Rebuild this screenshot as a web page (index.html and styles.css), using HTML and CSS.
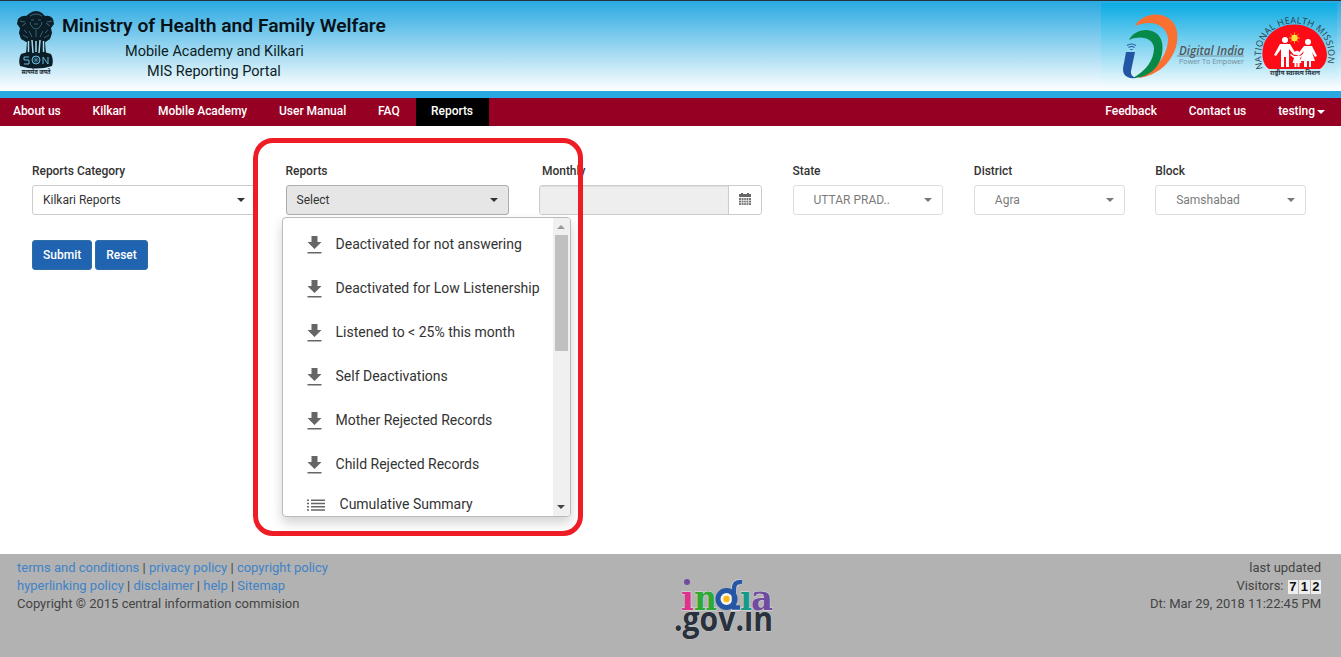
FILE: index.html
```html
<!DOCTYPE html>
<html lang="en">
<head>
<meta charset="utf-8">
<title>MIS Reporting Portal</title>
<link rel="stylesheet" href="styles.css">
</head>
<body>
<svg class="defs" width="0" height="0" aria-hidden="true">
  <symbol id="download" viewBox="0 0 16 20"><path d="M4.500 1h6v6h4L7.500 14 .5 7h4zM.5 17h14v1.500H.5z"/></symbol>
  <symbol id="list" viewBox="0 0 19 12"><path d="M0 .5h2V2H0zM4 .5h14V2H4zM0 3.800h2v1.500H0zM4 3.800h14v1.500H4zM0 7h2v1.500H0zM4 7h14v1.500H4zM0 10.200h2v1.500H0zM4 10.200h14v1.500H4z"/></symbol>
</svg>
<header class="header">
  <svg class="emblem" viewBox="0 0 40 66" width="40" height="66">
    <g fill="#0b1d27">
      <path d="M14 2q6-4 12 0l3 3q5-1 8 3l1 5-3 4 1 5-2 6-6 4H12l-7-4-2-6 1-5-3-4 1-5q4-4 8-3z"/>
      <path d="M9 27h22l-2 4 1 12H10l1-12z"/>
      <path d="M5 43q15-6 30 0 3 6 1 12-16 5-32 0-2-6 1-12z"/>
    </g>
    <g fill="none" stroke="#69b8db" stroke-width="1">
      <path d="M14 5q6-4 12 0M15 9h3m4 0h3M18 13h4M14 11q1 6 6 7 5-1 6-7M4 10l5 1m22 0 5-1M6 15l4-3m20 0 4 3M8 19l3 3m18 0 3-3M13 20l3 6m8 0 3-6M20 19v7M7 24l5 3m21-3-5 3" opacity=".45"/>
      <path d="M12.500 30v11M16 29l1 13M20 30v11M24 29l-1 13M27.500 30v11" stroke="#a8dbef" stroke-width="1.500"/>
      <circle cx="20" cy="49" r="4"/><path d="M20 45v8M16 49h8M17 46l6 6m0-6-6 6" stroke-width=".5"/>
      <path d="M13 46H8v3h5v4H8M27 53v-7l5 7v-7"/>
    </g>
    <text x="20" y="63" class="emblem-motto" textLength="29" lengthAdjust="spacingAndGlyphs">सत्यमेव जयते</text>
  </svg>
  <div class="titles">
    <h1>Ministry of Health and Family Welfare</h1>
    <p class="sub">Mobile Academy and Kilkari</p>
    <p class="sub portal">MIS Reporting Portal</p>
  </div>
  <div class="partners">
    <svg viewBox="1101 3 236 88" width="236" height="88">
      <path fill="#fb6f31" d="M1135 26C1140 17 1151 13 1161 15C1174 18 1179 29 1177 42C1174 61 1158 76 1138 78C1158 68 1168 54 1168 39C1167 25 1152 19 1135 26z"/>
      <path fill="#07894a" d="M1129 40C1133 32 1143 28 1152 31C1161 34 1164 43 1162 54C1159 69 1147 78 1133 78C1147 70 1154 59 1154 48C1153 38 1141 35 1129 40z"/>
      <path fill="#2256a5" d="M1126 52h9l-4 19q-1 5 5 7-9 1-12-4-2-4 0-11z"/>
      <path d="M1127 45.500q4.500-3 9 0M1128.500 47.500q3-2 6 0M1130.500 49.500h2" fill="none" stroke="#245b9e" stroke-width="1.100"/>
      <text class="digital" x="1179" y="55" textLength="65" lengthAdjust="spacingAndGlyphs">Digital India</text>
      <path d="M1177 56h67" stroke="#627079" stroke-width=".7"/>
      <text class="power" x="1179" y="63.500" textLength="65" lengthAdjust="spacingAndGlyphs">Power To Empower</text>
      <path id="arc" d="M1263 69C1246 8 1344 8 1326 69" fill="none"/>
      <path fill="#fd0b17" d="M1269 69C1260 63 1261 46 1267 38C1279 20 1310 20 1321 38C1330 51 1328 63 1320 69z"/>
      <text class="mission"><textPath href="#arc" textLength="126" lengthAdjust="spacing">NATIONAL HEALTH MISSION</textPath></text>
      <path d="M1294.500 32.500v11M1289 38h11M1290.500 34l8 8m0-8-8 8" stroke="#ff9a20" stroke-width="1"/><circle cx="1294.500" cy="38" r="3.200" fill="#ffe23a"/>
      <g fill="#fff">
        <circle cx="1285" cy="40" r="3"/><path d="M1280 44h10l6 10-2 1-5-6v18h-3V57h-2v10h-3V49l-5 7-2-1z"/>
        <circle cx="1308" cy="42" r="3"/><path d="M1304 46h8l5 10-2 1-3-5 3 9h-4v6h-2v-6h-2v6h-3v-6h-4l4-10-5 5-2-1z"/>
        <circle cx="1297" cy="53" r="2.300"/><path d="M1294 56h6l3-2 1 1-4 3 1.500 5h-2v4h-2v-4h-1v4h-2v-4h-2l1.500-5-4-3 1-1z"/>
      </g>
      <text class="hindi" x="1295" y="75" textLength="50" lengthAdjust="spacingAndGlyphs">राष्ट्रीय स्वास्थ्य मिशन</text>
    </svg>
  </div>
</header>
<nav class="nav">
  <a>About us</a><a>Kilkari</a><a>Mobile Academy</a><a>User Manual</a><a>FAQ</a><a class="active">Reports</a>
  <div class="nav-right"><a>Feedback</a><a>Contact us</a><a class="user">testing<i class="caret"></i></a></div>
</nav>
<main class="main">
  <div class="fields">
    <div class="field category"><label>Reports Category</label><div class="select">Kilkari Reports<i class="caret"></i></div></div>
    <div class="field reports"><label>Reports</label><div class="select open">Select<i class="caret"></i></div>
      <div class="menu">
        <ul>
          <li><svg><use href="#download"/></svg>Deactivated for not answering</li>
          <li><svg><use href="#download"/></svg>Deactivated for Low Listenership</li>
          <li><svg><use href="#download"/></svg>Listened to &lt; 25% this month</li>
          <li><svg><use href="#download"/></svg>Self Deactivations</li>
          <li><svg><use href="#download"/></svg>Mother Rejected Records</li>
          <li><svg><use href="#download"/></svg>Child Rejected Records</li>
          <li class="summary"><svg><use href="#list"/></svg>Cumulative Summary</li>
        </ul>
        <div class="scrollbar"><i class="up"></i><i class="thumb"></i><i class="down"></i></div>
      </div>
      <div class="highlight"></div>
    </div>
    <div class="field monthly"><label>Monthly</label><div class="date"><span></span><button>
      <svg width="12" height="13" viewBox="0 0 12 13"><path fill="#666" d="M0 1h2V0h2v1h4V0h2v1h2v3H0z"/><path fill="#777" d="M0 5h12v7H0z"/><path d="M0 7.500h12M0 9.700h12M2.500 5v7M4.800 5v7M7.200 5v7M9.500 5v7" stroke="#fff" stroke-width=".6"/></svg></button></div></div>
    <div class="field"><label>State</label><div class="select disabled">UTTAR PRAD..<i class="caret"></i></div></div>
    <div class="field"><label>District</label><div class="select disabled">Agra<i class="caret"></i></div></div>
    <div class="field"><label>Block</label><div class="select disabled">Samshabad<i class="caret"></i></div></div>
  </div>
  <div class="actions"><button>Submit</button><button>Reset</button></div>
</main>
<footer class="footer">
  <div class="links">
    <div><a>terms and conditions</a> | <a>privacy policy</a> | <a>copyright policy</a></div>
    <div><a>hyperlinking policy</a> | <a>disclaimer</a> | <a>help</a> | <a>Sitemap</a></div>
    <div>Copyright © 2015 central information commision</div>
  </div>
  <svg class="india" viewBox="670 576 110 70" width="110" height="70">
    <text class="gov" x="674" y="631" textLength="99" lengthAdjust="spacingAndGlyphs">.gov.ın</text>
    <g class="india-name">
      <text x="681" y="609.500" textLength="13" lengthAdjust="spacingAndGlyphs" fill="#dc348c">ı</text>
      <text x="694" y="609.500" textLength="23" lengthAdjust="spacingAndGlyphs" fill="#2daa35">n</text>
      <text x="740" y="609.500" textLength="12" lengthAdjust="spacingAndGlyphs" fill="#159a87">ı</text>
      <text x="751" y="609.500" textLength="22" lengthAdjust="spacingAndGlyphs" fill="#714ba0">a</text>
    </g>
    <circle cx="687" cy="582" r="3" fill="#714ba0"/>
    <path d="M742 582q-8-1-8 7v19h6" fill="none" stroke="#ddd" stroke-width="6"/>
    <circle cx="726.500" cy="599" r="8.500" fill="#f5f5ee" stroke="#2656a6" stroke-width="5"/>
    <path d="M742 582q-8-1-8 7v18.500h6" fill="none" stroke="#2656a6" stroke-width="4.500"/>
    <circle cx="726.500" cy="599" r="3.200" fill="#fdb817"/>
  </svg>
  <div class="stats">
    <div>last updated</div>
    <div class="visitors">Visitors: <span class="counter"><b>7</b><b>1</b><b>2</b></span></div>
    <div>Dt: Mar 29, 2018 11:22:45 PM</div>
  </div>
</footer>
</body>
</html>
```
FILE: styles.css
```css
* { box-sizing: border-box; }
body { margin: 0; width: 1341px; height: 657px; display: flex; flex-direction: column; overflow: hidden; background: #fff; color: #333; font: 12px/18px Roboto, sans-serif; }
h1, p, ul { margin: 0; padding: 0; }
.defs { position: absolute; }
.header { height: 98px; flex: none; display: flex; border-top: 1px solid #24333c; border-bottom: 7px solid #29a9e1; background: linear-gradient(#29a9e1, #fff); }
.emblem { margin: 10px 0 0 16px; overflow: visible; }
.emblem-motto { font: bold 7px "Noto Sans", sans-serif; text-anchor: middle; fill: #14242b; }
.titles { width: 323px; margin: 12px 0 0 6px; color: #071117; }
.titles h1 { font-size: 19.250px; line-height: 25px; font-weight: 600; white-space: nowrap; }
.sub { font-size: 14.500px; line-height: 20px; padding-left: 63px; margin-top: 4px; color: #0d1d24; }
.portal { padding-left: 85px; margin-top: 0; }
.partners { margin: 2px 4px 0 auto; height: 88px; background: linear-gradient(#0aabe3, #fff); }
.partners svg { display: block; overflow: visible; }
.digital { font: italic 600 13px "Open Sans", sans-serif; fill: #53575c; }
.power { font: 7px "Open Sans", sans-serif; fill: #788c98; }
.mission { font: 9px "Open Sans", sans-serif; fill: #263c48; }
.hindi { font: bold 6px "Noto Sans", sans-serif; text-anchor: middle; fill: #27333a; }
.nav { height: 28px; flex: none; display: flex; padding-left: 13px; background: #960023; color: #fff; font-weight: 500; line-height: 26px; letter-spacing: -.04px; }
.nav a { margin-right: 31.900px; }
.nav .active { margin: 0 0 0 -16px; padding: 0 15.500px; background: #000; }
.nav-right { margin-left: auto; display: flex; }
.nav .user { margin-right: 16px; }
.caret { display: inline-block; width: 0; border: 4px solid transparent; border-top-color: currentColor; border-bottom: 0; vertical-align: middle; }
.user .caret { margin-left: 2px; }
.main { height: 428px; padding: 35px 32px 0; }
.fields { display: grid; grid-template-columns: repeat(3, 223px) repeat(3, 150.800px); column-gap: 30.520px; }
.field { position: relative; }
.field label { display: block; height: 24px; line-height: 20px; font-weight: 500; letter-spacing: -.04px; }
.select { height: 30px; display: flex; align-items: center; justify-content: space-between; padding: 0 10px; border: 1px solid #ccc; border-radius: 3px; line-height: 28px; }
.category .select { padding-right: 9px; }
.open { background: #e6e6e6; border-color: #adadad; }
.disabled { padding-left: 20px; opacity: .65; }
.monthly label { padding-left: 3px; }
.date { display: flex; height: 30px; border: 1px solid #ccc; border-radius: 3px; }
.date span { flex: 1; background: #eee; box-shadow: inset 0 1px 1px #ddd; }
.date button { width: 33px; padding: 2px 0 0; border: 0; border-left: 1px solid #ccc; border-radius: 0 3px 3px 0; background: #fff; }
.menu { position: absolute; z-index: 2; left: -4px; top: 56px; width: 289px; height: 300px; display: flex; overflow: hidden; border: 1px solid #bbb; border-radius: 4px; background: #fff; box-shadow: 0 6px 12px rgba(0,0,0,.175); }
.menu ul { flex: 1; list-style: none; padding-top: 4px; }
.menu li { height: 44px; padding-left: 24px; display: flex; align-items: center; font-size: 14px; white-space: nowrap; }
.menu li svg { width: 16px; height: 20px; margin: 2px 13px 0 0; fill: #666; }
.menu .summary { height: 36px; }
.menu .summary svg { width: 19px; height: 12px; margin-right: 14px; }
.scrollbar { width: 17px; background: #f0f0f0; display: flex; flex-direction: column; align-items: center; }
.up { border: 4px solid transparent; border-bottom-color: #999; border-top: 0; margin-top: 7px; }
.thumb { width: 13px; height: 116px; margin-top: 6px; background: #c0c0c0; }
.down { border: 4px solid transparent; border-top-color: #444; border-bottom: 0; margin: auto 0 7px; }
.highlight { position: absolute; z-index: 3; left: -33px; top: -23px; width: 330px; height: 398px; border: 5px solid #ee1c25; border-radius: 20px; }
.actions { display: flex; gap: 3px; margin-top: 25px; }
.actions button { height: 30px; padding: 0 10px; border: 1px solid #2e6da4; border-radius: 3px; background: #2063b1; color: #fff; font: 500 12px Roboto, sans-serif; }
.footer { height: 103px; display: flex; justify-content: space-between; padding: 5px 20px 0 17px; background: #b2b2b2; font-size: 13px; color: #444; position: relative; }
.footer a { color: #3f83c8; }
.india { position: absolute; left: 670px; top: 22px; overflow: visible; }
.india-name { font: bold 36px "DejaVu Serif", serif; stroke: #ddd; stroke-width: 1px; paint-order: stroke; }
.gov { font: bold 34px "Open Sans", sans-serif; fill: #29313c; stroke: #ccc; stroke-width: 1px; paint-order: stroke; }
.stats { text-align: right; }
.visitors { display: flex; justify-content: flex-end; gap: 4px; }
.counter { display: flex; gap: 1px; align-self: center; margin-top: 2px; }
.counter b { width: 10.500px; height: 14px; background: #eee; color: #111; font: bold 13px/14px "Liberation Sans", sans-serif; text-align: center; }
```
